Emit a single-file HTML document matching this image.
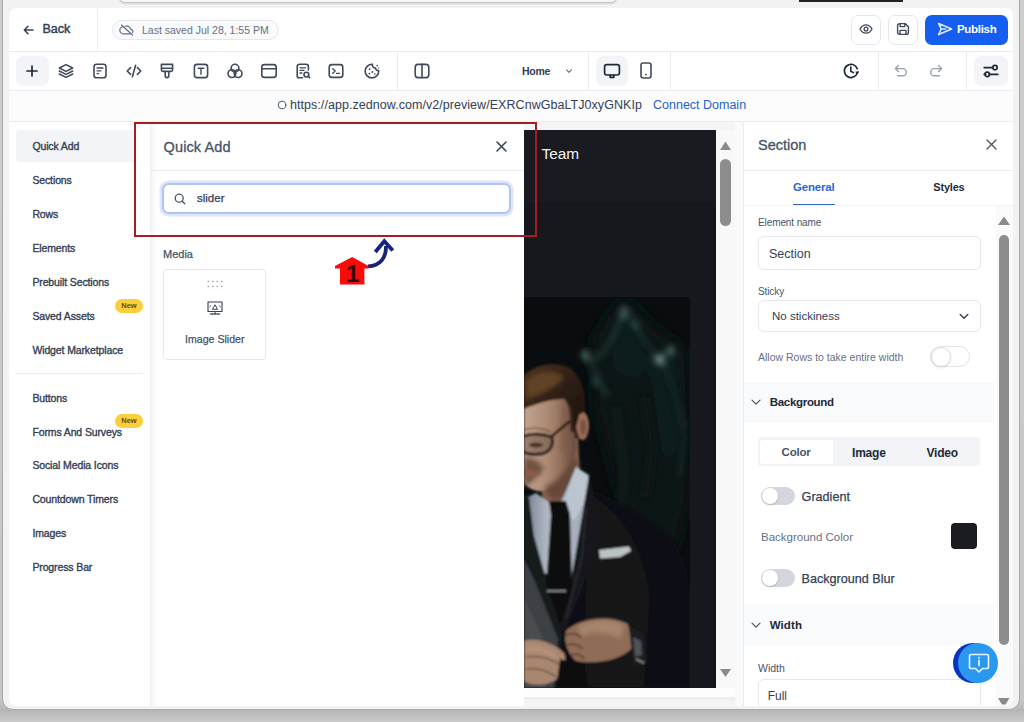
<!DOCTYPE html>
<html><head><meta charset="utf-8">
<style>
*{box-sizing:border-box;margin:0;padding:0}
html,body{width:1024px;height:722px;overflow:hidden}
body{background:linear-gradient(180deg,#cdcdcd 0,#c6c6c6 700px,#b6b6b6 710px,#c9c9c9 722px);font-family:"Liberation Sans",sans-serif;position:relative;color:#344054}
.abs{position:absolute}
#win{position:absolute;left:2px;top:-10px;width:1018.2px;height:720px;background:#f2f2f2;border:1.8px solid #a9a9a9;border-radius:0 0 11px 11px}
#addr{position:absolute;left:118px;top:-12px;width:500px;height:14.5px;border-radius:8px;background:#f7f7f7;border:1.5px solid #c6c6c6;box-shadow:0 1px 1.5px rgba(0,0,0,.12)}
#dark{position:absolute;left:799px;top:0;width:104px;height:2px;background:#222}
#app{position:absolute;left:8.5px;top:8.2px;width:1004.5px;height:697.8px;background:#fff;border-radius:8px;overflow:hidden}
.hl{position:absolute;background:#eaecf0}
.t{position:absolute;white-space:nowrap;line-height:1}
.nav{font-size:10.5px;color:#344054;left:23.4px;letter-spacing:-0.12px;-webkit-text-stroke:0.35px #344054}
svg{position:absolute;overflow:visible}
.md{font-weight:700;letter-spacing:-0.2px}
.tog{width:34px;height:18px;border-radius:9px;background:#d3d6dc}
.knob{width:16px;height:16px;border-radius:8px;background:#fff;box-shadow:0 1px 2px rgba(0,0,0,.2)}
.badge{width:28px;height:14px;border-radius:7px;background:#fbcf3c;color:#6b4a05;font-size:7.5px;font-weight:700;text-align:center;line-height:14px}
.ic{stroke:#414a5a;fill:none;stroke-width:1.6;stroke-linecap:round;stroke-linejoin:round}
</style></head><body>
<div id="win"></div>
<div id="addr"></div>
<div id="dark"></div>
<div id="app"><div id="in" style="position:absolute;left:0.5px;top:0.8px;width:1004px;height:697px">
<!-- coordinates inside #app are target minus (9,9) -->

<!-- HEADER ROW 1 -->
<div class="hl" style="left:0;top:42px;width:1004px;height:1px"></div>
<div class="hl" style="left:88px;top:0;width:1px;height:42px"></div>
<svg style="left:14px;top:16px" width="12" height="10" viewBox="0 0 12 10"><path class="ic" d="M10 5H1.5M5 1.2L1.3 5 5 8.8" style="stroke:#344054;stroke-width:1.5"/></svg>
<div class="t" id="back" style="left:33.5px;top:14.5px;font-size:12.5px;color:#344054;-webkit-text-stroke:0.45px #344054">Back</div>
<div class="abs" style="left:103px;top:11px;width:167px;height:20px;border:1px solid #e4e7ec;border-radius:10px;background:#f9fafb"></div>
<svg style="left:111px;top:15px" width="14" height="12" viewBox="0 0 14 12"><path class="ic" d="M3.2 2.6A3.6 3.6 0 0 0 3.6 9.8H10.5M5.2 2.2A4 4 0 0 1 10.6 5.2 2.4 2.4 0 0 1 12.6 8.6M1.5 1L12.5 11" style="stroke:#667085;stroke-width:1.2"/></svg>
<div class="t" id="saved" style="left:133px;top:16px;font-size:10.5px;color:#667085">Last saved Jul 28, 1:55 PM</div>

<div class="abs" style="left:842px;top:6px;width:30px;height:30px;border:1px solid #e4e7ec;border-radius:7px;background:#fff"></div>
<div class="abs" style="left:879px;top:6px;width:30px;height:30px;border:1px solid #e4e7ec;border-radius:7px;background:#fff"></div>
<div class="abs" style="left:916px;top:6px;width:83px;height:30px;border-radius:7px;background:#155eef"></div>
<div class="t" id="pub" style="left:948px;top:15.5px;font-size:11.5px;font-weight:700;color:#fff;letter-spacing:-0.3px">Publish</div>

<!-- HEADER ROW 2 -->
<div class="hl" style="left:0;top:81px;width:1004px;height:1px"></div>
<div class="abs" style="left:6.8px;top:47.3px;width:33px;height:30px;border-radius:7px;background:#f2f4f7"></div>

<div class="abs" style="left:0;top:82px;width:1004px;height:30px;background:#fcfcfd"></div>
<!-- TOOLBAR ICONS -->
<svg style="left:15.3px;top:54px" width="16" height="16" viewBox="0 0 16 16" ><path class="ic" d="M8 3v10M3 8h10" style="stroke:#1d2939;stroke-width:1.7"/></svg>
<svg style="left:48.8px;top:54px" width="16" height="16" viewBox="0 0 16 16" ><path class="ic" d="M8 1.6L1.3 5 8 8.4 14.7 5zM1.3 8L8 11.4 14.7 8M1.3 11L8 14.4 14.7 11"/></svg>
<svg style="left:83.2px;top:54px" width="16" height="16" viewBox="0 0 16 16" ><rect class="ic" x="2" y="1.2" width="12" height="13.6" rx="2.6"/><path class="ic" d="M5 5h6M5 7.8h4M5 10.6h1.5" style="stroke-width:1.3"/></svg>
<svg style="left:116.5px;top:54px" width="16" height="16" viewBox="0 0 16 16" ><path class="ic" d="M4.6 4.6L1.2 8l3.4 3.4M11.4 4.6L14.8 8l-3.4 3.4M9.6 2.2L6.4 13.8"/></svg>
<svg style="left:150px;top:54px" width="16" height="16" viewBox="0 0 16 16" ><path class="ic" d="M2.4 1.4h11.2v5.4a1.6 1.6 0 0 1-1.6 1.6H4a1.6 1.6 0 0 1-1.6-1.6zM2.4 5.2h11.2M6.2 8.6v4.2a1.8 1.8 0 0 0 3.6 0V8.6"/></svg>
<svg style="left:184px;top:54px" width="16" height="16" viewBox="0 0 16 16" ><rect class="ic" x="1.4" y="1.4" width="13.2" height="13.2" rx="2.6"/><path class="ic" d="M5.2 5.2h5.6M8 5.2v6" style="stroke-width:1.4"/></svg>
<svg style="left:218px;top:54px" width="16" height="16" viewBox="0 0 16 16" ><circle class="ic" cx="8" cy="5.2" r="3.9"/><circle class="ic" cx="4.9" cy="10.6" r="3.9"/><circle class="ic" cx="11.1" cy="10.6" r="3.9"/></svg>
<svg style="left:251.7px;top:54px" width="16" height="16" viewBox="0 0 16 16" ><rect class="ic" x="0.8" y="1.6" width="14.4" height="12.8" rx="2.6"/><path class="ic" d="M0.8 5.8h14.4"/></svg>
<svg style="left:285.7px;top:54px" width="16" height="16" viewBox="0 0 16 16" ><path class="ic" d="M13.4 7V3.6a2.4 2.4 0 0 0-2.4-2.4H4.6A2.4 2.4 0 0 0 2.2 3.6V13a1.8 1.8 0 0 0 1.8 1.8H7.4"/><path class="ic" d="M5 4.8h5.6M5 7.4h4M5 10h1.8" style="stroke-width:1.3"/><circle class="ic" cx="11.4" cy="11.6" r="2.4"/><path class="ic" d="M13.2 13.4l1.4 1.4"/></svg>
<svg style="left:319.2px;top:54px" width="16" height="16" viewBox="0 0 16 16" ><rect class="ic" x="1.2" y="1.6" width="13.6" height="12.8" rx="2.6"/><path class="ic" d="M4.8 5.8L7.2 8 4.8 10.2M8.6 10.4h2.8" style="stroke-width:1.4"/></svg>
<svg style="left:354.9px;top:54px" width="16" height="16" viewBox="0 0 16 16" ><path class="ic" d="M8.4 1.3A6.8 6.8 0 1 0 14.7 7.6 2.6 2.6 0 0 1 11.6 5 3 3 0 0 1 8.4 1.3z"/><circle cx="5.6" cy="6.2" r="0.9" fill="#3b4250"/><circle cx="8.4" cy="9" r="0.9" fill="#3b4250"/><circle cx="5.4" cy="10.6" r="0.9" fill="#3b4250"/><circle cx="10.8" cy="11" r="0.8" fill="#3b4250"/><circle cx="13.2" cy="2.6" r="0.8" fill="#3b4250"/><circle cx="14.6" cy="5" r="0.6" fill="#3b4250"/></svg>
<div class="hl" style="left:388px;top:43px;width:1px;height:38px"></div>
<svg style="left:404.8px;top:54px" width="16" height="16" viewBox="0 0 16 16" ><rect class="ic" x="1.2" y="1.4" width="13.6" height="13.2" rx="2.8"/><path class="ic" d="M8 1.4v13.2"/></svg>
<div class="t" id="home" style="left:513px;top:57px;font-size:10.5px;font-weight:700;color:#344054;letter-spacing:-0.25px">Home</div>
<svg style="left:556px;top:59.5px" width="8" height="6" viewBox="0 0 8 6" ><path class="ic" d="M1.5 1.8L4 4.3 6.5 1.8" style="stroke:#667085;stroke-width:1.1"/></svg>
<div class="hl" style="left:579px;top:43px;width:1px;height:38px"></div>
<div class="abs" style="left:587px;top:47px;width:32px;height:30px;border-radius:7px;background:#f2f4f7"></div>
<svg style="left:594px;top:54px" width="18" height="16" viewBox="0 0 18 16" ><rect class="ic" x="1.6" y="1.6" width="14.8" height="10.4" rx="2.2" style="stroke:#1d2939;stroke-width:1.7"/><path class="ic" d="M7.2 12.2v2.2h3.6v-2.2" style="stroke:#1d2939;stroke-width:1.7"/></svg>
<svg style="left:631px;top:53.5px" width="12" height="17" viewBox="0 0 12 17" ><rect class="ic" x="1" y="1" width="10" height="15" rx="2.2"/><circle cx="6" cy="12.6" r="0.9" fill="#3b4250"/></svg>
<div class="hl" style="left:661px;top:43px;width:1px;height:38px"></div>
<svg style="left:833px;top:53px" width="18" height="18" viewBox="0 0 18 18" ><path class="ic" d="M15.4 10.6A6.6 6.6 0 1 1 15.2 6.6" style="stroke:#1d2939;stroke-width:1.7"/><path class="ic" d="M8.8 5v4.2l2.6 1.4" style="stroke:#1d2939;stroke-width:1.6"/><path d="M13 9.8l2.6 2.8 1.600-3.4z" fill="#1d2939"/></svg>
<div class="hl" style="left:869px;top:43px;width:1px;height:38px"></div>
<svg style="left:885px;top:55px" width="14" height="14" viewBox="0 0 14 14" ><path class="ic" d="M4.4 1.6L1.4 4.6l3 3M1.6 4.6h7.2a3.6 3.6 0 0 1 0 7.2H3.6" style="stroke:#98a2b3;stroke-width:1.4"/></svg>
<svg style="left:920px;top:55px" width="14" height="14" viewBox="0 0 14 14" ><path class="ic" d="M9.6 1.6l3 3-3 3M12.4 4.6H5.2a3.6 3.6 0 0 0 0 7.2h5.2" style="stroke:#98a2b3;stroke-width:1.4"/></svg>
<div class="hl" style="left:957px;top:43px;width:1px;height:38px"></div>
<div class="abs" style="left:965px;top:47px;width:34px;height:30px;border-radius:7px;background:#f2f4f7"></div>
<svg style="left:973.5px;top:55px" width="16" height="14" viewBox="0 0 16 14" ><path class="ic" d="M1.2 3.6h8.4M1.2 10.4h1.4M6.4 10.4h8.4" style="stroke:#1d2939;stroke-width:1.7"/><circle class="ic" cx="12" cy="3.6" r="2.2" style="stroke:#1d2939;stroke-width:1.7"/><circle class="ic" cx="4.2" cy="10.4" r="2.2" style="stroke:#1d2939;stroke-width:1.7"/></svg>
<svg style="left:849.5px;top:14.5px" width="14" height="12" viewBox="0 0 14 12" ><path class="ic" d="M1 6C2.6 3 4.6 1.8 7 1.8S11.4 3 13 6c-1.6 3-3.6 4.200-6 4.2S2.6 9 1 6z" style="stroke-width:1.3"/><circle class="ic" cx="7" cy="6" r="1.9" style="stroke-width:1.3"/></svg>
<svg style="left:886.5px;top:13.5px" width="14" height="14" viewBox="0 0 14 14" ><path class="ic" d="M1.6 3.6a2 2 0 0 1 2-2h5.6l3.2 3.2v5.6a2 2 0 0 1-2 2H3.6a2 2 0 0 1-2-2zM4.2 1.8v2.8h4.6V1.8M4 12.2V8.4h6v3.8" style="stroke-width:1.4"/></svg>
<svg style="left:927.5px;top:13.5px" width="16" height="14" viewBox="0 0 16 14" ><path class="ic" d="M1.6 1.4L14.6 7 1.6 12.6 4.2 7zM4.2 7h4.4" style="stroke:#e0eaff;stroke-width:1.6"/></svg>
<svg style="left:267.5px;top:91px" width="10" height="10" viewBox="0 0 10 10" ><circle class="ic" cx="5" cy="5" r="3.8" style="stroke:#475467;stroke-width:1"/></svg>
<div class="t" id="url" style="left:281px;top:90px;font-size:12.5px;color:#344054;letter-spacing:0.05px">https://app.zednow.com/v2/preview/EXRCnwGbaLTJ0xyGNKIp</div>
<div class="t" id="cd" style="left:644px;top:90px;font-size:12.5px;color:#2563c9">Connect Domain</div>
<!-- URL ROW -->
<div class="hl" style="left:0;top:112px;width:1004px;height:1px"></div>

<!-- MAIN BODY bg -->
<div class="abs" style="left:0;top:113px;width:1004px;height:584px;background:#f4f5f7"></div>

<!-- LEFT SIDEBAR -->
<div class="abs" style="left:0;top:113px;width:141px;height:584px;background:#fff"></div>
<div class="abs" style="left:6.5px;top:121px;width:119px;height:32.5px;background:#f2f4f7;border-radius:4px 0 0 4px"></div>
<div class="t nav" style="top:132px">Quick Add</div>
<div class="t nav" style="top:166px">Sections</div>
<div class="t nav" style="top:200px">Rows</div>
<div class="t nav" style="top:234px">Elements</div>
<div class="t nav" style="top:268px">Prebuilt Sections</div>
<div class="t nav" style="top:302px">Saved Assets</div>
<div class="t nav" style="top:336px">Widget Marketplace</div>
<div class="hl" style="left:6px;top:364px;width:128px;height:1px"></div>
<div class="t nav" style="top:384px">Buttons</div>
<div class="t nav" style="top:418px">Forms And Surveys</div>
<div class="t nav" style="top:451px">Social Media Icons</div>
<div class="t nav" style="top:485px">Countdown Timers</div>
<div class="t nav" style="top:519px">Images</div>
<div class="t nav" style="top:553px">Progress Bar</div>
<div class="abs badge" style="left:106px;top:290px">New</div>
<div class="abs badge" style="left:106px;top:405px">New</div>

<!-- QUICK ADD PANEL -->
<div class="abs" style="left:141px;top:113px;width:374px;height:584px;background:#fff;border-left:1px solid #eef0f3"></div>
<div class="abs" style="left:142px;top:113px;width:6px;height:584px;background:linear-gradient(90deg,#f3f4f6,#fff)"></div>
<div class="t" id="qa" style="left:154.6px;top:130.7px;font-size:14.5px;color:#475467;letter-spacing:0.1px;-webkit-text-stroke:0.3px #475467">Quick Add</div>
<svg style="left:487px;top:132px" width="11" height="11" viewBox="0 0 11 11"><path class="ic" d="M1 1l9 9M10 1l-9 9" style="stroke:#344054;stroke-width:1.5"/></svg>
<div class="hl" style="left:142px;top:161px;width:373px;height:1px"></div>
<div class="abs" style="left:153px;top:174.3px;width:349px;height:31px;border-radius:6.5px;background:#fff;border:2px solid #b1c3f1;box-shadow:0 0 0 2.5px #dde6fa"></div>
<svg style="left:165px;top:184px" width="12" height="12" viewBox="0 0 12 12"><circle class="ic" cx="5.2" cy="5.2" r="4" style="stroke:#475467;stroke-width:1.3"/><path class="ic" d="M8.2 8.2l2.6 2.6" style="stroke:#475467;stroke-width:1.3"/></svg>
<div class="t" id="sl" style="left:188px;top:184px;font-size:11.5px;color:#344054;-webkit-text-stroke:0.25px #344054">slider</div>
<div class="t" id="media" style="left:154px;top:240px;font-size:11px;color:#475467;-webkit-text-stroke:0.25px #475467">Media</div>
<div class="abs" style="left:154px;top:260px;width:103px;height:91px;border:1px solid #e4e7ec;border-radius:4px;background:#fff"></div>
<svg style="left:198px;top:271px" width="16" height="8" viewBox="0 0 16 8"><g fill="#a3acba"><circle cx="1.3" cy="1.3" r="0.9"/><circle cx="5.8" cy="1.3" r="0.9"/><circle cx="10.3" cy="1.3" r="0.9"/><circle cx="14.8" cy="1.3" r="0.9"/><circle cx="1.3" cy="6.3" r="0.9"/><circle cx="5.8" cy="6.3" r="0.9"/><circle cx="10.3" cy="6.3" r="0.9"/><circle cx="14.8" cy="6.3" r="0.9"/></g></svg>
<svg style="left:198px;top:292px" width="16" height="15" viewBox="0 0 16 15"><rect class="ic" x="1" y="1" width="14" height="9.5" style="stroke:#344054;stroke-width:1.1"/><path class="ic" d="M5.6 8l2.400-4.2L10.4 8zM2.6 5.8l1-1M13.4 5.8l-1-1M8 10.5v2.2M3 13h10" style="stroke:#344054;stroke-width:1"/><circle cx="5.2" cy="13" r="0.8" fill="#344054"/><circle cx="8" cy="13" r="0.8" fill="#344054"/><circle cx="10.8" cy="13" r="0.8" fill="#344054"/></svg>
<div class="t" id="isl" style="left:176px;top:325.5px;font-size:10.6px;color:#475467;-webkit-text-stroke:0.25px #475467">Image Slider</div>

<!-- CANVAS -->
<div class="abs" style="left:515px;top:121px;width:192px;height:558px;background:#16181d"></div>
<div class="abs" style="left:515px;top:121px;width:192px;height:72px;background:#191b20"></div>
<div class="t" id="team" style="left:532.5px;top:137px;font-size:15.4px;color:#f2f2f2">Team</div>
<!-- PHOTO -->
<svg id="photo" style="left:515px;top:288px" width="166" height="391" viewBox="0 0 166 391">
<defs>
<filter id="b1" filterUnits="userSpaceOnUse" x="-20" y="-20" width="210" height="440"><feGaussianBlur stdDeviation="0.9"/></filter>
<filter id="b2" filterUnits="userSpaceOnUse" x="-20" y="-20" width="210" height="440"><feGaussianBlur stdDeviation="2"/></filter>
<filter id="b3" filterUnits="userSpaceOnUse" x="-20" y="-20" width="210" height="440"><feGaussianBlur stdDeviation="3"/></filter>
<filter id="b6" filterUnits="userSpaceOnUse" x="-40" y="-40" width="250" height="480"><feGaussianBlur stdDeviation="9"/></filter>
<clipPath id="pc"><rect x="0" y="0" width="166" height="391"/></clipPath>
<linearGradient id="skin" x1="0" y1="0" x2="1" y2="0"><stop offset="0" stop-color="#c2a48f"/><stop offset="0.45" stop-color="#ad8a74"/><stop offset="0.8" stop-color="#8b6755"/><stop offset="1" stop-color="#63473a"/></linearGradient>
<linearGradient id="shirt" x1="0" y1="0" x2="1" y2="0"><stop offset="0" stop-color="#7e8895"/><stop offset="0.3" stop-color="#aeb7c2"/><stop offset="1" stop-color="#a3adb9"/></linearGradient>
<linearGradient id="hairg" x1="0" y1="0" x2="1" y2="1"><stop offset="0" stop-color="#4e3321"/><stop offset="0.5" stop-color="#2f1f14"/><stop offset="1" stop-color="#170f0a"/></linearGradient>
</defs>
<g clip-path="url(#pc)">
<rect width="166" height="391" fill="#0a0d0f"/>
<!-- foliage -->
<g filter="url(#b6)">
<path d="M70 40L100 0 130 30 160 50 166 200 150 260 110 250 90 180 70 110z" fill="#0c1415"/>
<path d="M84 20L102 4 122 36 112 90 90 70z" fill="#101c1c"/>
<path d="M124 60L158 48 162 150 140 170z" fill="#0f1a1c"/>
<path d="M60 50L80 50 96 110 84 120z" fill="#0e1817"/>
<ellipse cx="100" cy="290" rx="14" ry="26" fill="#0c1516"/>
</g>
<g filter="url(#b3)">
<path d="M101 8L92 34 78 58 66 62 74 84 84 100" stroke="#1c302f" stroke-width="5" fill="none"/>
<path d="M104 14L118 40 132 60 148 52" stroke="#1a2d2d" stroke-width="4" fill="none"/>
<path d="M140 68L152 100 162 132" stroke="#162727" stroke-width="4" fill="none"/>
<ellipse cx="61" cy="58" rx="3" ry="5.5" fill="#54736e"/>
<ellipse cx="100" cy="16" rx="3" ry="7" fill="#43625e"/>
<ellipse cx="136" cy="63" rx="5" ry="4.5" fill="#6f8d89"/>
<ellipse cx="147" cy="54" rx="3" ry="5" fill="#557471"/>
<ellipse cx="111" cy="28" rx="2.5" ry="4" fill="#3a5855"/>
<ellipse cx="72" cy="84" rx="3" ry="5" fill="#2c4846"/>
<path d="M150 90L160 140 156 180" stroke="#102020" stroke-width="6" fill="none"/>
<path d="M92 110L100 170 96 230" stroke="#0e1a19" stroke-width="8" fill="none"/>
<path d="M120 100L128 150 122 200" stroke="#0d1817" stroke-width="8" fill="none"/>
</g>
<g filter="url(#b1)">
<!-- suit body -->
<path d="M0 215L50 186C70 192 112 212 140 234C158 250 166 280 166 300V391H0z" fill="#0e0f13"/>
<path d="M64 196C92 212 118 240 126 300L120 391H60z" fill="#121419"/>
<!-- neck -->
<path d="M14 168L54 140 57 196 20 214z" fill="#84604c"/>
<!-- ear -->
<ellipse cx="58.5" cy="129" rx="6.5" ry="14" fill="#9a6e58"/>
<ellipse cx="59" cy="130" rx="3" ry="8" fill="#7a5241"/>
<!-- face -->
<path d="M0 100C10 96 30 96 42 102C50 116 52 138 52 150C48 172 34 190 18 194C10 195 3 190 0 186z" fill="url(#skin)"/>
<!-- hair -->
<path d="M0 78C10 68 30 64 44 70C56 78 63 94 61 114L55 118C54 124 52 130 50 136L46 134C46 120 46 108 40 102C28 102 14 106 0 112z" fill="url(#hairg)"/>
<path d="M2 84C14 74 30 72 40 80C34 90 16 98 2 102z" fill="#684629" opacity="0.85" filter="url(#b2)"/>
<!-- face shadows -->
<path d="M0 160C8 160 16 164 20 172C14 178 8 186 0 190z" fill="#5e4033" opacity="0.8" filter="url(#b2)"/>
<path d="M0 172C6 172 14 174 18 177C12 180 6 180 0 180z" fill="#8a5a4c"/>
<path d="M20 190C34 184 44 172 50 158L54 168 50 196 30 204z" fill="#5f4235" opacity="0.8" filter="url(#b2)"/>
<path d="M38 104L46 110 50 150 44 170 36 150z" fill="#7a5848" opacity="0.55" filter="url(#b2)"/>
<!-- glasses -->
<path d="M0 139C8 136 20 137 28 140C30 148 26 155 18 157C10 158 3 157 0 155" fill="#3a2a22" fill-opacity="0.3" stroke="#1e120c" stroke-width="2.8"/>
<ellipse cx="12" cy="148" rx="7" ry="2.6" fill="#3a261d" opacity="0.8"/>
<path d="M0 133C8 130 20 131 27 135" stroke="#6a4836" stroke-width="1.6" fill="none" opacity="0.7"/>
<path d="M28 139L46 124" stroke="#1e120c" stroke-width="2.6"/>
<!-- shirt -->
<path d="M4 200L12 196 34 212 52 170 65 178 63 200 47 284 20 276 8 232z" fill="url(#shirt)"/>
<path d="M38 210L52 170 65 180 61 204 50 224z" fill="#bcc5cf"/>
<!-- left dark lapel edge + gray jacket -->
<path d="M0 196L5 200 10 240 38 336 34 391H0z" fill="#191b1f"/>
<path d="M0 262L10 282 34 342 30 391H0z" fill="#3d4045"/>
<path d="M0 300L14 330 26 360 22 391H0z" fill="#484b50"/>
<!-- right lapel -->
<path d="M65 178L76 232 58 292 40 336 36 326 47 284z" fill="#17191e"/>
<path d="M62 210L58 260 42 322" stroke="#2a2d33" stroke-width="1.5" fill="none"/>
<!-- tie -->
<path d="M25 204L42 204 46 217 48 290 37 326 22 290 27 218z" fill="#0d0e10"/>
<path d="M23 294H42" stroke="#a4a7ab" stroke-width="1.5"/>
<!-- pocket square -->
<path d="M75 253L105 249.5 107 254 96 260 76 261.5z" fill="#bcc3c6"/>
<!-- right hand -->
<path d="M42 334C54 322 84 318 104 327L109 350C98 363 72 368 52 364C44 357 39 345 42 334z" fill="#8f6c56"/>
<path d="M54 328C70 321 90 321 100 328L96 342C84 334 68 334 56 340z" fill="#a7846b" filter="url(#b2)"/>
<path d="M42 338C48 336 56 337 57 341M43 348C49 346 56 348 58 352M47 358C53 356 58 358 60 362" stroke="#553b2d" stroke-width="1.6" fill="none"/>
<!-- watch -->
<path d="M105 329L120 336 123 366 109 369z" fill="#1c1d20"/>
<path d="M109 340L117 344 118 358 111 360z" fill="#4e5257"/>
<path d="M112 362L120 366" stroke="#8f9397" stroke-width="1.5"/>
<!-- left hand -->
<path d="M0 344C12 340 30 346 40 356C44 366 40 378 30 384C18 390 6 388 0 384z" fill="#a98670"/>
<path d="M2 352C12 350 24 354 32 360" stroke="#c09c84" stroke-width="3" fill="none" filter="url(#b2)"/>
<path d="M2 360C16 358 28 362 36 368M2 372C14 370 24 374 32 380" stroke="#73543f" stroke-width="1.5" fill="none"/>
<!-- dark jacket below hands -->
<path d="M36 362L60 368 64 391H32z" fill="#0b0c0f"/>
</g>
</g>
</svg>
<!-- canvas scrollbar -->
<div class="abs" style="left:707px;top:121px;width:19.5px;height:558px;background:#f8f8f8"></div>
<svg style="left:711px;top:132px" width="11" height="9" viewBox="0 0 11 9"><path d="M0 9L5.5 0.5 11 9z" fill="#8a8a8a"/></svg>
<div class="abs" style="left:711px;top:150px;width:11px;height:67px;border-radius:5.5px;background:#8d8d8d"></div>
<svg style="left:711.2px;top:660.5px" width="11" height="8" viewBox="0 0 11 8"><path d="M0 0h11L5.5 8z" fill="#8a8a8a"/></svg>
<div class="abs" style="left:515px;top:679px;width:211.5px;height:9px;background:#fdfdfd"></div><div class="abs" style="left:515px;top:688px;width:219px;height:9px;background:linear-gradient(180deg,#e9eaec,#f3f4f6 4px)"></div>

<!-- RED ANNOTATION -->
<div class="abs" style="left:125px;top:113px;width:403px;height:115px;border:2.5px solid #a51d22"></div>
<svg style="left:311px;top:216px" width="80" height="60" viewBox="320 225 80 60"><path d="M368 266.3C380 266 386.3 258 386 246" fill="none" stroke="#15257d" stroke-width="3.8"/><path d="M375.3 252L384.3 241.2 392.8 250.6" fill="none" stroke="#15257d" stroke-width="3.8" stroke-linejoin="miter"/><path d="M352.2 257L368.5 266v2.5H364.4V284.6H340V268.5H335V266z" fill="#fb0a0a"/></svg>
<div class="t" id="one" style="left:337px;top:253px;font-size:24px;font-weight:700;color:#3a0505">1</div>

<!-- RIGHT PANEL -->
<div class="abs" style="left:726px;top:113px;width:8px;height:584px;background:#f9fafb"></div>
<div class="abs" style="left:734px;top:113px;width:270px;height:584px;background:#fff;border-left:1px solid #eaecf0"></div>

<div class="t" id="rsec" style="left:749px;top:129.5px;font-size:14.5px;color:#475467;-webkit-text-stroke:0.3px #475467">Section</div>
<svg style="left:977px;top:130px" width="11" height="11" viewBox="0 0 11 11"><path class="ic" d="M1 1l9 9M10 1l-9 9" style="stroke:#475467;stroke-width:1.3"/></svg>
<div class="hl" style="left:735px;top:161px;width:269px;height:1px"></div>
<div class="t md" id="tgen" style="left:784px;top:173.5px;font-size:11.5px;color:#2f66cf">General</div>
<div class="abs" style="left:784px;top:194.6px;width:42px;height:2px;background:#2f66cf"></div>
<div class="t md" id="tsty" style="left:924.3px;top:173.5px;font-size:11px;color:#1d2939">Styles</div>
<div class="hl" style="left:735px;top:196px;width:269px;height:1px;background:#f2f4f7"></div>
<!-- panel scrollbar -->
<div class="abs" style="left:987px;top:197px;width:17px;height:500px;background:#fafafa"></div>
<svg style="left:988.5px;top:207px" width="12" height="9" viewBox="0 0 12 9"><path d="M0 9L6 0.5 12 9z" fill="#8a8a8a"/></svg>
<div class="abs" style="left:990px;top:226px;width:10px;height:410px;border-radius:5px;background:#8d8d8d"></div>
<svg style="left:989.2px;top:689.3px" width="11.5" height="7" viewBox="0 0 11.5 7"><path d="M0 0h11.5L7.5 6.6h-3.5z" fill="#8a8a8a"/></svg>

<div class="t" id="eln" style="left:749px;top:209.5px;font-size:10px;color:#475467;letter-spacing:-0.1px">Element name</div>
<div class="abs" style="left:748.5px;top:227.5px;width:223px;height:34px;border:1px solid #e4e7ec;border-radius:6px;background:#fff"></div>
<div class="t" id="secv" style="left:760px;top:239.5px;font-size:12.5px;color:#344054">Section</div>
<div class="t" id="stk" style="left:749px;top:277.7px;font-size:10px;color:#475467;letter-spacing:-0.1px">Sticky</div>
<div class="abs" style="left:748.5px;top:291.5px;width:223px;height:32px;border:1px solid #e4e7ec;border-radius:6px;background:#fff"></div>
<div class="t" id="nost" style="left:763px;top:302.5px;font-size:11.5px;color:#344054">No stickiness</div>
<svg style="left:950px;top:304px" width="10" height="7" viewBox="0 0 10 7"><path class="ic" d="M1.2 1.5L5 5.3 8.8 1.5" style="stroke:#344054;stroke-width:1.4"/></svg>
<div class="t" id="allow" style="left:749px;top:343px;font-size:10.5px;color:#667085">Allow Rows to take entire width</div>
<div class="abs" style="left:921px;top:337.5px;width:40px;height:21px;border-radius:10.5px;background:#fff;border:1px solid #dfe2e7"></div>
<div class="abs" style="left:921.5px;top:338px;width:20px;height:20px;border-radius:10px;background:#fff;border:1px solid #d9dce1;box-shadow:0 1px 2px rgba(0,0,0,.12)"></div>

<div class="abs" style="left:735px;top:373px;width:251px;height:41px;background:#f9fafb"></div>
<svg style="left:742px;top:390px" width="10" height="7" viewBox="0 0 10 7"><path class="ic" d="M1 1.2L5 5.2 9 1.2" style="stroke:#475467;stroke-width:1.2"/></svg>
<div class="t md" id="bgh" style="left:760.7px;top:388px;font-size:11.5px;color:#1d2939;letter-spacing:-0.3px">Background</div>

<div class="abs" style="left:749px;top:428px;width:222px;height:29px;background:#f2f4f7;border-radius:3px"></div>
<div class="abs" style="left:751px;top:431px;width:73px;height:24px;background:#fff;border-radius:3px"></div>
<div class="t md" id="tcol" style="left:772.6px;top:438px;font-size:11.5px;color:#475467">Color</div>
<div class="t md" id="timg" style="left:843px;top:438px;font-size:12px;color:#1d2939">Image</div>
<div class="t md" id="tvid" style="left:917.5px;top:438px;font-size:12px;color:#1d2939">Video</div>

<div class="abs tog" style="left:752px;top:478px"></div><div class="abs knob" style="left:753px;top:479px"></div>
<div class="t" id="grad" style="left:792.6px;top:481.9px;font-size:12.6px;color:#344054;-webkit-text-stroke:0.25px #344054">Gradient</div>
<div class="t" id="bgc" style="left:752px;top:523.5px;font-size:11.5px;color:#667085">Background Color</div>
<div class="abs" style="left:942px;top:514px;width:26px;height:26px;border-radius:4px;background:#1b1c21"></div>
<div class="abs tog" style="left:752px;top:560.5px"></div><div class="abs knob" style="left:753px;top:561.5px"></div>
<div class="t" id="bgb" style="left:792.6px;top:564px;font-size:12.6px;color:#344054;-webkit-text-stroke:0.25px #344054">Background Blur</div>

<div class="abs" style="left:735px;top:595px;width:251px;height:41px;background:#f9fafb"></div>
<svg style="left:742px;top:613px" width="10" height="7" viewBox="0 0 10 7"><path class="ic" d="M1 1.2L5 5.2 9 1.2" style="stroke:#475467;stroke-width:1.2"/></svg>
<div class="t md" id="wh" style="left:760.7px;top:611px;font-size:11.5px;color:#1d2939;letter-spacing:0.1px">Width</div>
<div class="t" id="wl" style="left:749px;top:654px;font-size:10.5px;color:#475467">Width</div>
<div class="abs" style="left:748.5px;top:670.5px;width:223px;height:33px;border:1px solid #e4e7ec;border-radius:6px;background:#fff"></div>
<div class="t" id="full" style="left:758.7px;top:681.5px;font-size:12px;color:#344054">Full</div>

<!-- chat bubble -->
<div class="abs" style="left:944px;top:634px;width:40px;height:40px;border-radius:20px;background:#0b34c2"></div>
<div class="abs" style="left:949px;top:634px;width:40px;height:40px;border-radius:20px;background:#2b98f0"></div>
<svg style="left:959px;top:644px" width="22" height="21" viewBox="0 0 22 21"><path d="M3 1.5h16a1.5 1.5 0 0 1 1.5 1.5v11a1.5 1.5 0 0 1-1.5 1.5h-4.5l-3.5 3.500-3.500-3.5H3a1.5 1.5 0 0 1-1.500-1.5V3A1.5 1.5 0 0 1 3 1.5z" fill="none" stroke="#e8f4ff" stroke-width="1.6" stroke-linejoin="round"/><path d="M11 7.5v5" stroke="#e8f4ff" stroke-width="1.7" stroke-linecap="round"/><circle cx="11" cy="4.8" r="1" fill="#e8f4ff"/></svg>

<!-- END -->
</div></div>
</body></html>
